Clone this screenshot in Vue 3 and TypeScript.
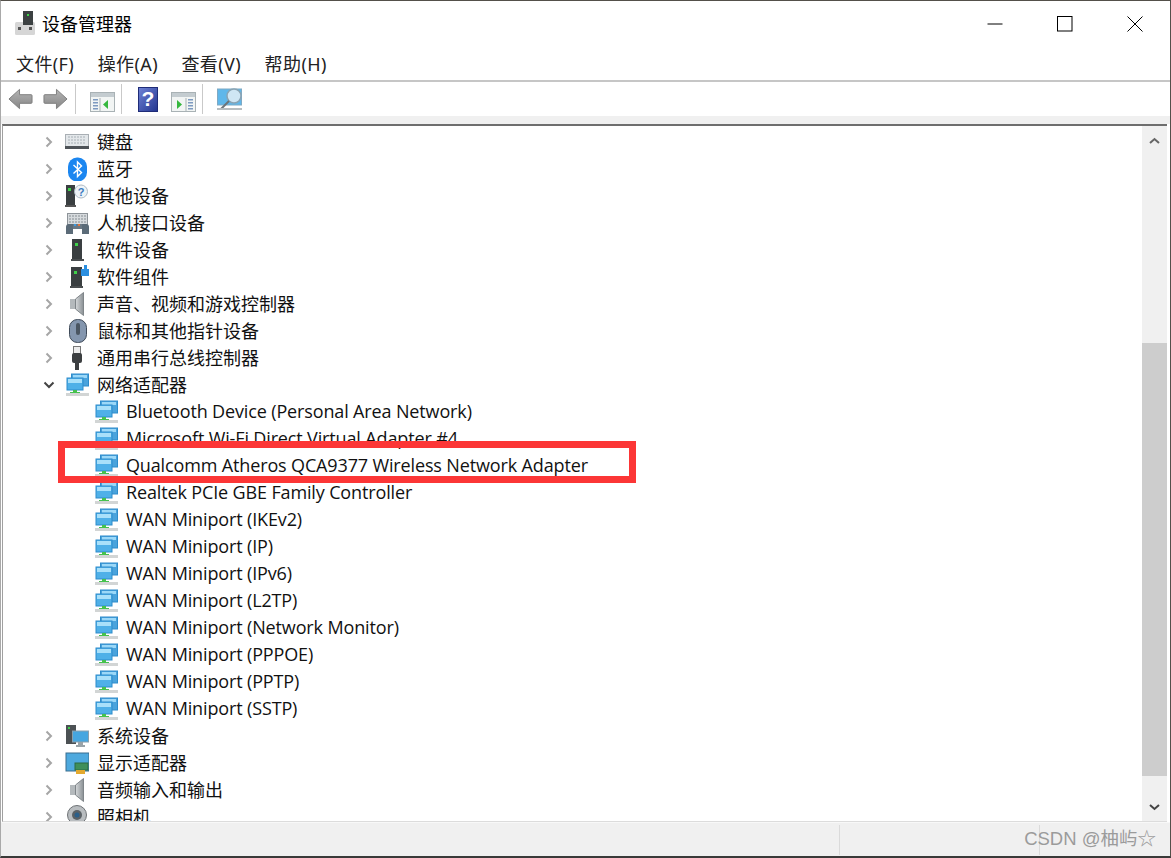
<script setup lang="ts">
interface Row { label: string; icon: string; child?: boolean; open?: boolean }
const net = (label: string): Row => ({ label, icon: 'net', child: true })
const rows: Row[] = [
  { label: '键盘', icon: 'kbd' },
  { label: '蓝牙', icon: 'bt' },
  { label: '其他设备', icon: 'other' },
  { label: '人机接口设备', icon: 'hid' },
  { label: '软件设备', icon: 'soft' },
  { label: '软件组件', icon: 'comp' },
  { label: '声音、视频和游戏控制器', icon: 'sound' },
  { label: '鼠标和其他指针设备', icon: 'mouse' },
  { label: '通用串行总线控制器', icon: 'usb' },
  { label: '网络适配器', icon: 'net', open: true },
  net('Bluetooth Device (Personal Area Network)'),
  net('Microsoft Wi-Fi Direct Virtual Adapter #4'),
  net('Qualcomm Atheros QCA9377 Wireless Network Adapter'),
  net('Realtek PCIe GBE Family Controller'),
  net('WAN Miniport (IKEv2)'),
  net('WAN Miniport (IP)'),
  net('WAN Miniport (IPv6)'),
  net('WAN Miniport (L2TP)'),
  net('WAN Miniport (Network Monitor)'),
  net('WAN Miniport (PPPOE)'),
  net('WAN Miniport (PPTP)'),
  net('WAN Miniport (SSTP)'),
  { label: '系统设备', icon: 'sys' },
  { label: '显示适配器', icon: 'disp' },
  { label: '音频输入和输出', icon: 'sound' },
  { label: '照相机', icon: 'cam' },
]
const menus = ['文件(F)', '操作(A)', '查看(V)', '帮助(H)']
</script>

<template>
  <div class="win">
    <header class="title">
      <svg class="appicon" width="22" height="24" viewBox="0 0 22 24">
        <rect x="1" y="11" width="20" height="13" rx="1.500" fill="#d6d6d6" />
        <rect x="9" y="0" width="10" height="14" fill="#3c4142" />
        <rect x="13" y="3" width="2" height="2" fill="#3fd04a" />
        <rect x="4" y="16" width="3" height="3" fill="#555" />
        <rect x="15" y="16" width="3" height="3" fill="#555" />
      </svg>
      <span class="title-text">设备管理器</span>
      <div class="controls">
        <svg width="16" height="16" viewBox="0 0 16 16"><path d="M0.500 8h15" stroke="#000" fill="none" /></svg>
        <svg width="16" height="16" viewBox="0 0 16 16"><rect x="0.500" y="0.500" width="14.500" height="14.500" stroke="#000" fill="none" /></svg>
        <svg width="16" height="16" viewBox="0 0 16 16"><path d="M0.500 0.500l15 15M15.500 0.500l-15 15" stroke="#000" fill="none" /></svg>
      </div>
    </header>

    <nav class="menu">
      <span v-for="m in menus" :key="m">{{ m }}</span>
    </nav>

    <div class="toolbar">
      <svg class="t-back" width="25" height="24" viewBox="0 0 26 24">
        <defs><linearGradient id="ag" x1="0" y1="0" x2="0" y2="1"><stop offset="0" stop-color="#b4b4b4" /><stop offset="1" stop-color="#868686" /></linearGradient></defs>
        <path d="M1 12 12 2v5.500h12a1 1 0 0 1 1 1v7a1 1 0 0 1-1 1H12V22Z" fill="url(#ag)" stroke="#7d7d7d" />
      </svg>
      <svg class="t-fwd" width="25" height="24" viewBox="0 0 26 24">
        <path d="M25 12 14 2v5.500H2a1 1 0 0 0-1 1v7a1 1 0 0 0 1 1h12V22Z" fill="url(#ag)" stroke="#7d7d7d" />
      </svg>
      <i class="sep s1"></i>
      <svg class="t-panel1" width="25" height="20" viewBox="0 0 25 20">
        <rect x="0.500" y="0.500" width="24" height="19" fill="#f2f5f4" stroke="#a9b2b5" />
        <rect x="1" y="1" width="23" height="4" fill="#c4ccd0" />
        <rect x="3" y="7" width="5" height="1.500" fill="#7d9ac0" /><rect x="3" y="10" width="5" height="1.500" fill="#7d9ac0" /><rect x="3" y="13" width="5" height="1.500" fill="#7d9ac0" /><rect x="3" y="16" width="5" height="1.500" fill="#7d9ac0" />
        <path d="M10 6v13" stroke="#a9b2b5" />
        <path d="M13 12.500 18 8v9Z" fill="#35b83e" />
      </svg>
      <i class="sep s2"></i>
      <svg class="t-help" width="20" height="25" viewBox="0 0 20 25">
        <defs><linearGradient id="hg" x1="0" y1="0" x2="1" y2="1"><stop offset="0" stop-color="#6f83d6" /><stop offset="1" stop-color="#23358f" /></linearGradient></defs>
        <rect x="0.500" y="0.500" width="19" height="24" fill="url(#hg)" stroke="#1f2c78" />
        <text x="10" y="19" text-anchor="middle" class="q">?</text>
      </svg>
      <svg class="t-panel2" width="25" height="20" viewBox="0 0 25 20">
        <rect x="0.500" y="0.500" width="24" height="19" fill="#f2f5f4" stroke="#a9b2b5" />
        <rect x="1" y="1" width="23" height="4" fill="#c4ccd0" />
        <rect x="17" y="7" width="5" height="1.500" fill="#7d9ac0" /><rect x="17" y="10" width="5" height="1.500" fill="#7d9ac0" /><rect x="17" y="13" width="5" height="1.500" fill="#7d9ac0" /><rect x="17" y="16" width="5" height="1.500" fill="#7d9ac0" />
        <path d="M15 6v13" stroke="#a9b2b5" />
        <path d="M11 12.500 6 8v9Z" fill="#35b83e" />
      </svg>
      <i class="sep s3"></i>
      <svg class="t-scan" width="26" height="24" viewBox="0 0 26 24">
        <rect x="0.500" y="1" width="24" height="16" fill="#5fb7ea" stroke="#7fa9c4" />
        <circle cx="17" cy="8" r="7" fill="#cfe6f4" stroke="#8aa3b3" stroke-width="1.500" />
        <path d="M12 13 4 21" stroke="#6d7478" stroke-width="2" />
        <path d="M0 21h25" stroke="#b7bdc0" stroke-width="2" />
      </svg>
    </div>

    <div class="strip"></div>

    <main class="view">
      <div class="tree">
        <div v-for="r in rows" :key="r.label" class="row" :class="{ child: r.child }">
          <span v-if="!r.child" class="chev">
            <svg v-if="r.open" width="12" height="12" viewBox="0 0 12 12"><path d="M1.500 3.500 6 8l4.500-4.500" fill="none" stroke="#444" stroke-width="2" /></svg>
            <svg v-else width="12" height="12" viewBox="0 0 12 12"><path d="M3.500 1.500 8 6l-4.500 4.500" fill="none" stroke="#a6a6a6" stroke-width="2" /></svg>
          </span>
          <svg class="ic" width="24" height="24" viewBox="0 0 24 24">
            <defs v-if="r.icon === 'sound'">
              <linearGradient id="sg" x1="0" y1="0" x2="1" y2="0"><stop offset="0" stop-color="#d6d9db" /><stop offset="1" stop-color="#8a9094" /></linearGradient>
            </defs>
            <template v-if="r.icon === 'net'">
              <rect x="6.500" y="1" width="17" height="12" fill="#4aa3dc" stroke="#2e8ccb" />
              <rect x="8" y="2" width="14" height="3" fill="#9bd8f8" />
              <rect x="2" y="5" width="16" height="12" fill="#4fb0e8" stroke="#2e8ccb" />
              <rect x="3" y="6" width="14" height="4" fill="#a9e0fa" />
              <path d="M8 17h4v2h3v1H5v-1h3Z" fill="#46c24e" />
              <rect x="1" y="20" width="23" height="3" fill="#d2d5d5" />
            </template>
            <template v-else-if="r.icon === 'kbd'">
              <rect x="0.500" y="4.500" width="23" height="14" fill="#e3e7ea" stroke="#a9afb4" />
              <path d="M3 7h18M3 10h18M3 13h18" stroke="#a8b0b6" stroke-dasharray="2 1" />
              <rect x="0" y="16" width="24" height="3" fill="#4e5358" />
            </template>
            <template v-else-if="r.icon === 'bt'">
              <rect x="3" y="0.500" width="19" height="24" rx="9" fill="#1b86f0" />
              <path d="M8.500 8l8 7.500-4 4V5l4 4-8 7.500" fill="none" stroke="#fff" stroke-width="1.400" />
            </template>
            <template v-else-if="r.icon === 'other'">
              <rect x="1" y="1" width="9" height="20" fill="#3a3f41" />
              <rect x="3" y="4" width="3" height="3" fill="#3fd04a" />
              <rect x="0" y="21" width="11" height="2" fill="#555" />
              <circle cx="16" cy="7.500" r="6.500" fill="#eef3f7" stroke="#aebbc5" />
              <text x="16" y="11.500" text-anchor="middle" class="qs">?</text>
            </template>
            <template v-else-if="r.icon === 'hid'">
              <rect x="2.500" y="2.500" width="20" height="11" fill="#d7dbde" stroke="#8e9499" />
              <path d="M4 5h17M4 8h17M4 11h17" stroke="#868d92" stroke-dasharray="2 1" />
              <path d="M1 23v-7q0-3 3-3h4v10Z" fill="#5b6b78" />
              <path d="M24 23v-7q0-3-3-3h-4v10Z" fill="#5b6b78" />
              <rect x="8" y="13" width="9" height="5" fill="#6a7884" />
              <rect x="9" y="13" width="2" height="2" fill="#3f9be0" /><rect x="13" y="13" width="2" height="2" fill="#e0763f" />
            </template>
            <template v-else-if="r.icon === 'soft'">
              <rect x="7" y="1" width="10" height="20" fill="#3a3f41" />
              <rect x="10" y="5" width="3" height="3" fill="#3fd04a" />
              <rect x="6" y="21" width="13" height="2" fill="#4a4e50" />
            </template>
            <template v-else-if="r.icon === 'comp'">
              <rect x="6" y="2" width="11" height="19" fill="#3a3f41" />
              <rect x="9" y="6" width="3" height="3" fill="#3fd04a" />
              <rect x="5" y="21" width="13" height="2" fill="#4a4e50" />
              <path d="M16 4h3V0h3v4h2v7h-8Z" fill="#2b8fe0" />
            </template>
            <template v-else-if="r.icon === 'sound'">
              <rect x="5" y="7" width="6" height="10" fill="#b4b9bc" />
              <path d="M10.500 7 18.500 0.500v23L10.500 17Z" fill="url(#sg)" stroke="#7f8589" />
            </template>
            <template v-else-if="r.icon === 'mouse'">
              <rect x="4.500" y="0.500" width="17" height="23" rx="8" fill="#8496ae" stroke="#3f4a58" />
              <rect x="11" y="4" width="4" height="12" rx="2" fill="#4a5561" />
            </template>
            <template v-else-if="r.icon === 'usb'">
              <rect x="8.500" y="0.500" width="7" height="7" fill="#ececec" stroke="#777" />
              <rect x="7" y="7" width="10" height="10" rx="2" fill="#3c3f41" />
              <rect x="10" y="17" width="4" height="7" fill="#3c3f41" />
            </template>
            <template v-else-if="r.icon === 'sys'">
              <rect x="1" y="1" width="10" height="19" fill="#4c5154" />
              <rect x="3" y="3" width="2" height="2" fill="#3fd04a" />
              <rect x="7.500" y="7" width="16" height="11" fill="#46a6e0" stroke="#8aa0ad" />
              <path d="M13 18h5v3h2v2h-9v-2h2Z" fill="#9aa3a8" />
            </template>
            <template v-else-if="r.icon === 'disp'">
              <rect x="1" y="2" width="23" height="18" fill="#4ea9de" stroke="#3a6f8f" />
              <rect x="10" y="12" width="13" height="7" fill="#3f8f5a" stroke="#2c6a42" />
              <rect x="11" y="19" width="9" height="4" fill="#e3a92f" />
            </template>
            <template v-else-if="r.icon === 'cam'">
              <circle cx="12" cy="10" r="9.500" fill="#b9bdc0" stroke="#6e7275" />
              <circle cx="12" cy="10" r="5" fill="#5b6166" />
              <circle cx="12" cy="10" r="2.500" fill="#2b5f8a" />
            </template>
          </svg>
          <span class="label">{{ r.label }}</span>
        </div>
      </div>
      <aside class="scroll">
        <svg class="sb-btn" width="25" height="27" viewBox="0 0 25 27"><path d="M8 17l4.500-4 4.500 4" fill="none" stroke="#666" stroke-width="2" /></svg>
        <div class="track"><div class="thumb"></div></div>
        <svg class="sb-btn" width="25" height="27" viewBox="0 0 25 27"><path d="M8 11l4.500 4 4.500-4" fill="none" stroke="#444" stroke-width="2" /></svg>
      </aside>
    </main>

    <footer class="status">
      <i class="cell c1"></i>
      <i class="cell c2"></i>
      <span class="mark">CSDN @柚屿☆</span>
    </footer>

    <div class="redbox"></div>
  </div>
</template>

<style scoped>
.win {
  position: relative;
  width: 1171px;
  height: 858px;
  box-sizing: border-box;
  border-top: 1px solid #54504a;
  border-right: 1px solid #54504a;
  border-bottom: 2px solid #3a3a38;
  border-left: 1px solid #a9a9a9;
  background: #fff;
  font-family: "Noto Sans", "Noto Sans CJK SC", sans-serif;
  display: flex;
  flex-direction: column;
  overflow: hidden;
  color: #111;
}
.title {
  height: 48px;
  flex: none;
  display: flex;
  align-items: center;
  padding-left: 13px;
}
.appicon { margin-right: 6px; margin-bottom: 4px; }
.title-text { font-size: 18px; color: #000; margin-bottom: 5px; }
.controls {
  margin-left: auto;
  display: flex;
  gap: 54px;
  padding-right: 27px;
  margin-bottom: 3px;
}
.menu {
  height: 33px;
  flex: none;
  display: flex;
  gap: 23.500px;
  padding-left: 15px;
  padding-bottom: 4px;
  align-items: center;
  font-size: 18px;
  letter-spacing: 0.4px;
  color: #222;
  border-bottom: 2px solid #c6c6c6;
  box-sizing: border-box;
}
.toolbar {
  height: 34px;
  flex: none;
  display: flex;
  align-items: center;
  padding-left: 7px;
}
.t-fwd { margin-left: 10px; }
.sep { width: 1px; height: 30px; background: #c9c9c9; display: block; }
.s1 { margin-left: 7px; }
.t-panel1 { margin-left: 14px; margin-top: 5px; }
.s2 { margin-left: 6px; }
.t-help { margin-left: 16px; }
.t-panel2 { margin-left: 13px; margin-top: 5px; }
.s3 { margin-left: 6px; }
.t-scan { margin-left: 14px; margin-top: 2px; }
.q { font: 700 21px "Liberation Sans", sans-serif; fill: #fff; }
.qs { font: 700 11px "Liberation Sans", sans-serif; fill: #3b7bc0; }
.strip { height: 8px; flex: none; background: #f0f0f0; }
.view {
  flex: 1;
  min-height: 0;
  display: flex;
  margin: 0 3px 0 1px;
  border-top: 2px solid #6e6e6e;
  border-left: 1px solid #a0a0a0;
  border-bottom: 1px solid #dcdcdc;
  background: #fff;
}
.tree {
  flex: 1;
  min-width: 0;
  overflow: hidden;
  padding-top: 2px;
}
.row {
  height: 27px;
  display: flex;
  align-items: center;
  padding-left: 40px;
  font-size: 18px;
  color: #111;
  white-space: nowrap;
}
.row.child {
  padding-left: 91px;
  font-family: "Open Sans", "Noto Sans CJK SC", sans-serif;
  letter-spacing: -0.14px;
}
.chev { width: 12px; height: 12px; display: block; margin-right: 10px; flex: none; }
.chev svg { display: block; }
.ic { flex: none; margin-right: 8px; }
.label { line-height: 27px; }
.row:not(.child) .label { padding-top: 2px; }
.scroll {
  width: 25px;
  flex: none;
  background: #f0f0f0;
  display: flex;
  flex-direction: column;
}
.sb-btn { display: block; flex: none; }
.track { flex: 1; position: relative; }
.thumb {
  position: absolute;
  left: 0;
  right: 0;
  top: 190px;
  height: 433px;
  background: #cdcdcd;
}
.status {
  height: 33px;
  flex: none;
  background: #f0f0f0;
  position: relative;
  display: flex;
  margin-top: auto;
  border-top: 1px solid #f8f8f8;
}
.cell { display: block; width: 1px; height: 30px; background: #dadada; position: absolute; top: 2px; }
.c1 { left: 838px; }
.c2 { left: 1038px; }
.mark {
  position: absolute;
  right: 14px;
  top: 1px;
  font: 18.500px/30px "Liberation Sans", "Noto Sans CJK SC", sans-serif;
  color: #9b9b9b;
}
.redbox {
  position: absolute;
  left: 57px;
  top: 440px;
  width: 578px;
  height: 42px;
  box-sizing: border-box;
  border: 7px solid #fc3636;
  pointer-events: none;
}
</style>
<style>
html, body { margin: 0; background: #fff; }
</style>
